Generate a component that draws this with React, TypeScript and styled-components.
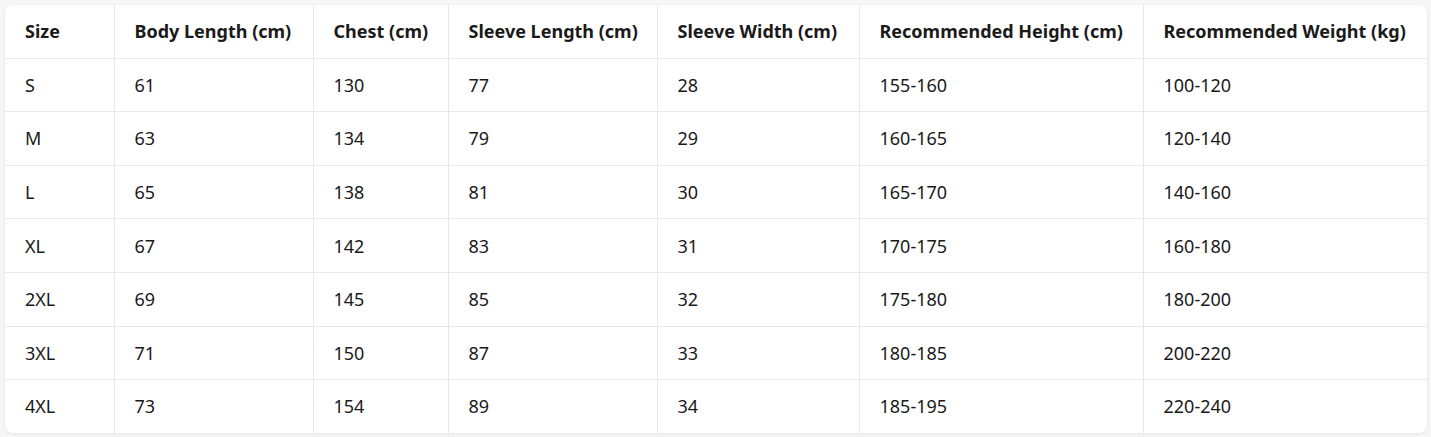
import styled, { createGlobalStyle } from "styled-components";

const GlobalStyle = createGlobalStyle`
  html, body {
    margin: 0;
    background: #f7f7f7;
  }
  body {
    padding: 5px 4px 4px 5px;
    font-family: "Segoe UI", "Noto Sans", "Open Sans", sans-serif;
    color: #1a1a1a;
  }
`;

const columns = [
  { label: "Size", width: 109 },
  { label: "Body Length (cm)", width: 199 },
  { label: "Chest (cm)", width: 135 },
  { label: "Sleeve Length (cm)", width: 209 },
  { label: "Sleeve Width (cm)", width: 202 },
  { label: "Recommended Height (cm)", width: 284 },
  { label: "Recommended Weight (kg)", width: 284 },
];

const rows = [
  ["S", "61", "130", "77", "28", "155-160", "100-120"],
  ["M", "63", "134", "79", "29", "160-165", "120-140"],
  ["L", "65", "138", "81", "30", "165-170", "140-160"],
  ["XL", "67", "142", "83", "31", "170-175", "160-180"],
  ["2XL", "69", "145", "85", "32", "175-180", "180-200"],
  ["3XL", "71", "150", "87", "33", "180-185", "200-220"],
  ["4XL", "73", "154", "89", "34", "185-195", "220-240"],
];

export default function App() {
  return (
    <>
      <GlobalStyle />
      <Card>
        <Table>
          <colgroup>
            {columns.map((c) => (
              <col key={c.label} style={{ width: c.width }} />
            ))}
          </colgroup>
          <thead>
            <tr>
              {columns.map((c) => (
                <Head key={c.label}>{c.label}</Head>
              ))}
            </tr>
          </thead>
          <tbody>
            {rows.map((r) => (
              <tr key={r[0]}>
                {r.map((v, i) => (
                  <Cell key={i}>{v}</Cell>
                ))}
              </tr>
            ))}
          </tbody>
        </Table>
      </Card>
    </>
  );
}

const Card = styled.div`
  width: 1422px;
  background: #fff;
  border-radius: 8px;
  box-shadow: 0 1px 4px rgba(0, 0, 0, 0.08);
  overflow: hidden;
`;

const Table = styled.table`
  width: 100%;
  table-layout: fixed;
  border-collapse: collapse;
  border-style: hidden;
  font-size: 18px;
`;

const Head = styled.th`
  height: 52.6px;
  padding: 0 20px;
  text-align: left;
  font-weight: 700;
  border: 1px solid #e8e8e8;
  white-space: nowrap;
`;

const Cell = styled.td`
  height: 52.6px;
  padding: 0 20px;
  text-align: left;
  font-weight: 400;
  border: 1px solid #e8e8e8;
`;
